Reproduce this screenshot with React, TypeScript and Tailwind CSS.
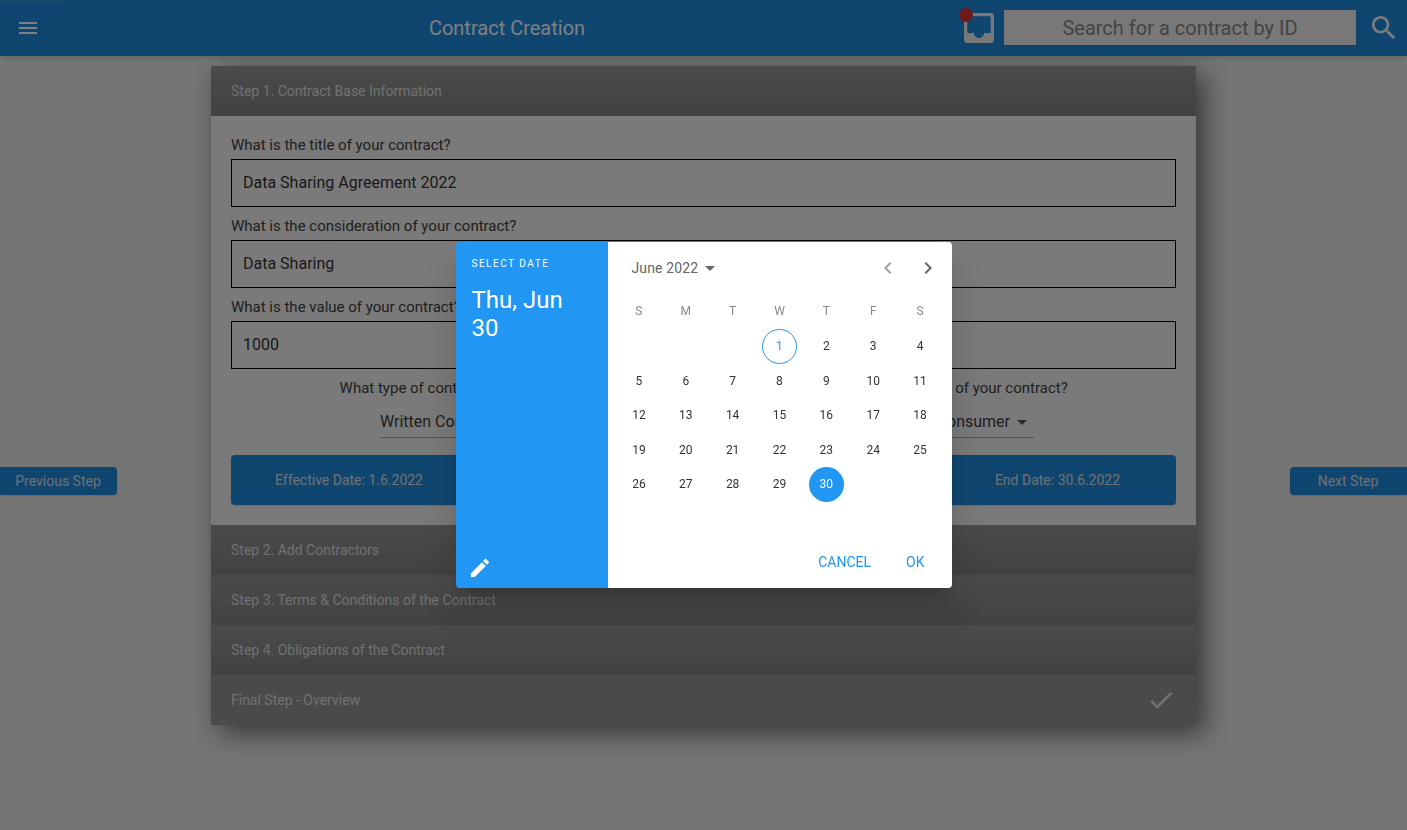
const FONT = { fontFamily: "Roboto, 'Liberation Sans', sans-serif" };

const WEEK_DAYS = ["S", "M", "T", "W", "T", "F", "S"];

// June 2022 starts on a Wednesday
const CALENDAR = [
  [null, null, null, 1, 2, 3, 4],
  [5, 6, 7, 8, 9, 10, 11],
  [12, 13, 14, 15, 16, 17, 18],
  [19, 20, 21, 22, 23, 24, 25],
  [26, 27, 28, 29, 30, null, null],
];

const FIELDS = [
  { label: "What is the title of your contract?", value: "Data Sharing Agreement 2022" },
  { label: "What is the consideration of your contract?", value: "Data Sharing" },
  { label: "What is the value of your contract?", value: "1000" },
];

function Icon({ d, className }: { d: string; className: string }) {
  return (
    <svg viewBox="0 0 24 24" fill="currentColor" className={className}>
      <path d={d} />
    </svg>
  );
}

function StepHeader({ title, check }: { title: string; check?: boolean }) {
  return (
    <div
      className={`h-[50px] px-5 flex items-center justify-between text-sm text-[#e0e0e0] ${
        check ? "bg-[#949494]" : "bg-gradient-to-b from-[#969696] to-[#848484]"
      }`}
    >
      <span>{title}</span>
      {check && (
        <Icon
          d="M9 16.17L4.83 12l-1.42 1.41L9 19 21 7l-1.41-1.41z"
          className="w-[30px] h-[30px] text-[#e4e4e4]"
        />
      )}
    </div>
  );
}

function SelectBox({ text, label, boxClass }: { text: string; label: string; boxClass: string }) {
  return (
    <div className="flex flex-col items-center">
      <div className="text-[15px] leading-5 text-[#404040] whitespace-nowrap">{label}</div>
      <div
        className={`mt-[8px] h-[32px] flex items-center border-b border-[#a8a8a8] text-base text-[#404040] ${boxClass}`}
      >
        <span>{text}</span>
        <Icon d="M7 10l5 5 5-5z" className="w-6 h-6 text-[#555]" />
      </div>
    </div>
  );
}

function Calendar() {
  return (
    <div className="flex-1 bg-white flex flex-col">
      <div className="h-[52px] flex items-center pl-6 pr-3 text-sm tracking-[0.15px] text-[#666]">
        <span>June 2022</span>
        <Icon d="M7 10l5 5 5-5z" className="w-6 h-6 text-[#666]" />
        <Icon d="M15.41 7.41L14 6l-6 6 6 6 1.41-1.41L10.83 12z" className="w-6 h-6 ml-auto text-[#a0a0a0]" />
        <Icon d="M10 6L8.59 7.41 13.17 12l-4.58 4.59L10 18l6-6z" className="w-6 h-6 ml-4 text-[#666]" />
      </div>
      <div className="grid grid-cols-7 px-[8px] mt-[8px] h-[17px] text-xs text-[#8a8a8a]">
        {WEEK_DAYS.map((d, i) => (
          <div key={i} className="flex items-center justify-center">
            {d}
          </div>
        ))}
      </div>
      <div className="grid grid-cols-7 px-[8px] mt-[10px] auto-rows-[34.5px] text-xs text-[#333]">
        {CALENDAR.flat().map((d, i) => (
          <div key={i} className="flex items-center justify-center">
            {d === 1 && (
              <span className="w-[35px] h-[35px] rounded-full border border-[#2196f3] text-[#2196f3] flex items-center justify-center">
                1
              </span>
            )}
            {d === 30 && (
              <span className="w-[35px] h-[35px] rounded-full bg-[#2196f3] text-white flex items-center justify-center">
                30
              </span>
            )}
            {d !== 1 && d !== 30 && d}
          </div>
        ))}
      </div>
      <div className="mt-auto h-[52px] flex items-center justify-end pr-[27px] pb-[1px] text-sm text-[#2196f3]">
        <span>CANCEL</span>
        <span className="ml-[35px]">OK</span>
      </div>
    </div>
  );
}

function DatePicker() {
  return (
    <div className="fixed inset-0 z-20 bg-black/50 flex items-center justify-center">
      <div className="w-[496px] h-[346px] rounded overflow-hidden flex shadow-[0_11px_15px_-7px_rgba(0,0,0,0.2),0_24px_38px_3px_rgba(0,0,0,0.14)]">
        <div className="w-[152px] bg-[#2196f3] text-white flex flex-col pl-4 pt-[14px] pb-[8px]">
          <div className="text-[10px] leading-[16px] tracking-[1.5px]">SELECT DATE</div>
          <div className="mt-[14px] text-2xl leading-[28px] pr-4">Thu, Jun 30</div>
          <Icon
            d="M3 17.25V21h3.75L17.81 9.94l-3.75-3.75L3 17.25zM20.71 7.04c.39-.39.39-1.02 0-1.41l-2.34-2.34c-.39-.39-1.02-.39-1.41 0l-1.83 1.83 3.75 3.75 1.83-1.83z"
            className="w-6 h-6 mt-auto ml-[-4px]"
          />
        </div>
        <Calendar />
      </div>
    </div>
  );
}

export default function App() {
  return (
    <div style={FONT} className="relative h-[830px] overflow-hidden bg-[#ebebeb]">
      <header className="relative z-10 h-14 bg-[#1f8ce0] flex items-center text-white shadow-md">
        <div className="absolute left-0 top-0 h-[2px] w-16 bg-[#2a98c8]" />
        <Icon d="M3 18h18v-2H3v2zm0-5h18v-2H3v2zm0-7v2h18V6H3z" className="w-6 h-6 ml-4" />
        <div className="ml-[362px] w-[210px] text-center text-xl">Contract Creation</div>
        <div className="relative ml-auto w-10 h-10 mr-[5px]">
          <Icon
            d="M19 3H4.99c-1.11 0-1.98.89-1.98 2L3 19c0 1.1.88 2 1.99 2H19c1.1 0 2-.9 2-2V5c0-1.11-.9-2-2-2zm0 12h-4c0 1.66-1.35 3-3 3s-3-1.34-3-3H4.99V5H19v10z"
            className="w-10 h-10 text-[#f0f0f0]"
          />
          <span className="absolute left-0 top-0 w-[14px] h-[14px] rounded-full bg-[#dd3333]" />
        </div>
        <div className="w-[352px] h-[35px] mb-[1px] bg-[#f0f0f0] text-[#888] text-xl flex items-center justify-center shadow-sm">
          Search for a contract by ID
        </div>
        <Icon
          d="M15.5 14h-.79l-.28-.27C15.41 12.59 16 11.11 16 9.5 16 5.91 13.09 3 9.5 3S3 5.91 3 9.5 5.91 16 9.5 16c1.61 0 3.09-.59 4.23-1.57l.27.28v.79l5 4.99L20.49 19l-4.99-5zm-6 0C7.01 14 5 11.99 5 9.5S7.01 5 9.5 5 14 7.01 14 9.5 11.99 14 9.5 14z"
          className="w-8 h-8 ml-3 mr-[7px] text-[#f4f8fb]"
        />
      </header>

      <main className="flex justify-between">
        <div className="w-[211px]">
          <button className="mt-[411px] w-[117px] h-[28px] rounded-r bg-[#1f8ce0] text-sm text-[#e0e0e0] shadow-sm pr-[1px]">
            Previous Step
          </button>
        </div>

        <div className="w-[985px] h-[659px] mt-[10px] rounded-t shadow-[8px_8px_28px_rgba(0,0,0,0.55)]">
          <StepHeader title="Step 1. Contract Base Information" />
          <div className="h-[409px] bg-[#f5f5f5] px-5 pt-[19px]">
            {FIELDS.map((field) => (
              <div key={field.label} className="h-[81px]">
                <div className="text-[15px] leading-5 text-[#404040]">{field.label}</div>
                <div className="mt-[4px] h-12 border border-black flex items-center px-[11px] text-base text-[#333]">
                  {field.value}
                </div>
              </div>
            ))}
            <div className="flex">
              <div className="w-[470px]">
                <SelectBox
                  label="What type of contract is this contract?"
                  text="Written Contract"
                  boxClass="w-[174px] justify-between ml-[2px]"
                />
              </div>
              <div className="w-[470px] ml-[2px]">
                <SelectBox
                  label="What is the main kind of your contract?"
                  text="Data Consumer"
                  boxClass="w-[192px] justify-end"
                />
              </div>
            </div>
            <div className="mt-[17px] flex justify-between">
              <div className="w-[236px] h-[50px] rounded bg-[#1f8ce0] text-sm text-[#e0e0e0] flex items-center justify-center shadow-sm">
                Effective Date: 1.6.2022
              </div>
              <div className="w-[237px] h-[50px] rounded bg-[#1f8ce0] text-sm text-[#e0e0e0] flex items-center justify-center shadow-sm">
                End Date: 30.6.2022
              </div>
            </div>
          </div>
          <StepHeader title="Step 2. Add Contractors" />
          <StepHeader title="Step 3. Terms &amp; Conditions of the Contract" />
          <StepHeader title="Step 4. Obligations of the Contract" />
          <StepHeader title="Final Step - Overview" check />
        </div>

        <div className="w-[211px] flex justify-end">
          <button className="mt-[411px] w-[117px] h-[28px] rounded-l bg-[#1f8ce0] text-sm text-[#e0e0e0] shadow-sm self-start pr-[1px]">
            Next Step
          </button>
        </div>
      </main>

      <DatePicker />
    </div>
  );
}
